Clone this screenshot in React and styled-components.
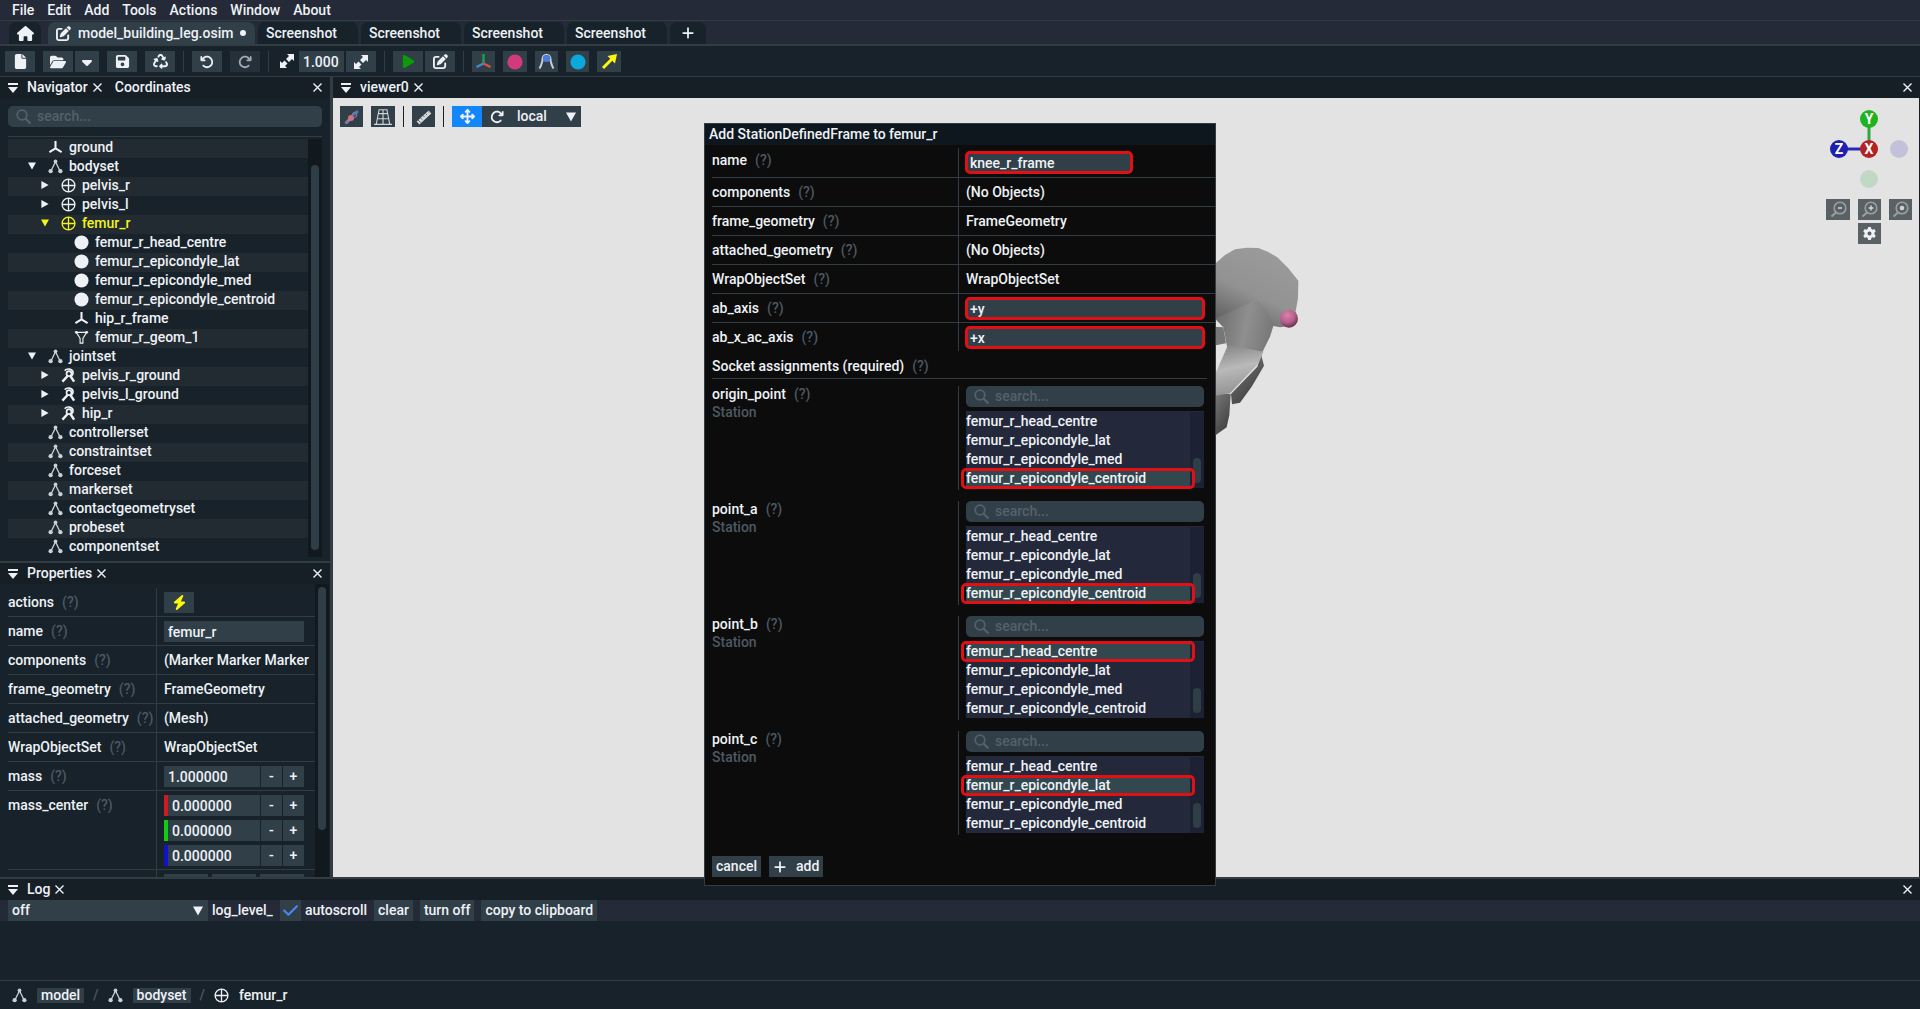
import React from "react";
import styled, { createGlobalStyle, css } from "styled-components";
import {
  FaHouse, FaFile, FaFolderOpen, FaCaretDown, FaFloppyDisk, FaRecycle, FaArrowRotateLeft,
  FaArrowRotateRight, FaPlay, FaPenToSquare, FaBolt, FaPlus, FaGear, FaCheck, FaArrowsUpDownLeftRight,
} from "react-icons/fa6";

const c = {
  text: "#eef2f6",
  dim: "#4d5963",
  bar: "#242a37",
  panel: "#18222a",
  head: "#161e26",
  zebra: "#222a32",
  control: "#313f49",
  line: "#323c43",
  modal: "#0c0c0c",
  red: "#e01014",
};

const GlobalStyle = createGlobalStyle`
  *, *::before, *::after { box-sizing: border-box; }
  body { margin: 0; background: ${c.panel}; overflow: hidden; }
  body, button, input, select {
    font: 500 14px/19px Roboto, "Liberation Sans", sans-serif;
    color: ${c.text};
  }
  button, input, select { border: 0; border-radius: 0; padding: 0; margin: 0; outline: none; }
  ul { list-style: none; margin: 0; padding: 0; }
  svg { display: block; flex: none; }
`;

const Page = styled.div`
  display: flex;
  flex-direction: column;
  height: 100vh;
`;

/* ---------- top bars ---------- */
const MenuBar = styled.nav`
  display: flex;
  gap: 3px;
  height: 21px;
  padding: 0 7px;
  background: ${c.bar};
  border-bottom: 1px solid ${c.line};
`;
const MenuItem = styled.button`
  padding: 0 5px;
  background: none;
  line-height: 21px;
`;
const TabBar = styled.div`
  display: flex;
  gap: 3px;
  height: 25px;
  padding: 1px 9px 0;
  background: ${c.bar};
  border-bottom: 2px solid ${c.line};
`;
const Tab = styled.button`
  display: flex;
  align-items: center;
  gap: 7px;
  width: ${(p) => p.$width}px;
  padding: 0 8px;
  justify-content: ${(p) => (p.$center ? "center" : "flex-start")};
  border-radius: 7px 7px 0 0;
  background: ${(p) => (p.$active ? c.control : c.panel)};
  white-space: nowrap;
`;
const HomeTab = styled(Tab)`
  margin-right: 4px;
`;
const Dot = styled.span`
  width: 6px;
  height: 6px;
  border-radius: 50%;
  background: ${c.text};
`;
const Toolbar = styled.div`
  display: flex;
  gap: 8px;
  height: 31px;
  padding: 5px;
  border-bottom: 1px solid ${c.line};
`;
const Group = styled.div`
  display: flex;
  gap: ${(p) => p.$gap ?? 2}px;
`;
const Divider = styled.span`
  width: 1px;
  height: 21px;
  background: ${(p) => p.$color ?? c.line};
`;
const IconButton = styled.button`
  display: flex;
  flex: none;
  align-items: center;
  justify-content: center;
  width: ${(p) => p.$width ?? 30}px;
  height: 21px;
  background: ${(p) => p.$bg ?? c.control};
  color: ${(p) => p.$color ?? c.text};
`;
const ScaleIcon = styled.span`
  display: flex;
  align-items: center;
  justify-content: center;
  width: 20px;
`;

/* ---------- form controls ---------- */
const highlight = css`
  outline: 3px solid ${c.red};
  outline-offset: -2px;
  border-radius: 4px;
`;
const Field = styled.input`
  width: ${(p) => p.$width ?? "100%"};
  min-width: 0;
  height: 21px;
  padding: 0 4px;
  background: ${c.control};
  ${(p) => p.$marked && highlight}
`;
const TextButton = styled.button`
  display: flex;
  align-items: center;
  gap: 9px;
  height: ${(p) => p.$height ?? 21}px;
  padding: 0 4px;
  background: ${c.control};
  white-space: nowrap;
`;
const SelectWrap = styled.div`
  display: grid;
  align-items: center;
  width: ${(p) => p.$width}px;
  height: 21px;
  background: ${c.control};
  & > * { grid-area: 1 / 1; }
  svg { justify-self: end; margin-right: 5px; pointer-events: none; }
`;
const Select = styled.select`
  appearance: none;
  width: 100%;
  height: 21px;
  padding: 0 ${(p) => p.$pad ?? 4}px;
  background: none;
`;
const SearchWrap = styled.label`
  display: flex;
  align-items: center;
  gap: 6px;
  height: 21px;
  padding: 0 8px;
  border-radius: 5px;
  background: ${c.control};
  color: #54616b;
`;
const SearchInput = styled.input`
  flex: 1;
  min-width: 0;
  background: none;
  &::placeholder { color: #54616b; opacity: 1; }
`;

/* ---------- panels ---------- */
const Main = styled.div`
  display: flex;
  flex: 1;
  min-height: 0;
`;
const Sidebar = styled.aside`
  display: flex;
  flex-direction: column;
  width: 333px;
  border-right: 3px solid ${c.line};
`;
const PanelHead = styled.div`
  display: flex;
  align-items: center;
  gap: 5px;
  height: 21px;
  padding: 0 8px;
  background: ${c.head};
  flex: none;
`;
const PanelTitle = styled.span`
  margin-left: ${(p) => p.$left ?? 4}px;
`;
const BareButton = styled.button`
  display: flex;
  background: none;
  margin-left: ${(p) => (p.$end ? "auto" : "0")};
`;
const Navigator = styled.section`
  padding-bottom: 4px;
  border-bottom: 2px solid ${c.line};
`;
const NavBody = styled.div`
  padding: 8px 8px 0;
`;
const TreeArea = styled.div`
  display: flex;
  margin-top: 9px;
  padding-top: 2px;
  border-top: 1px solid ${c.line};
`;
const Tree = styled.ul`
  flex: 1;
`;
const TreeRow = styled.li`
  display: flex;
  align-items: center;
  height: 19px;
  padding-bottom: 3px;
  padding-left: ${(p) => 20 + p.$depth * 13}px;
  color: ${(p) => (p.$selected ? "#f4f41c" : c.text)};
  &:nth-child(odd) { background: ${c.zebra}; }
`;
const Twisty = styled.span`
  width: 20px;
`;
const NodeIcon = styled.span`
  width: 21px;
`;
const Track = styled.div`
  width: 14px;
  padding: ${(p) => p.$top}px 3px 0;
  background: ${(p) => p.$bg ?? "#11191f"};
`;
const Thumb = styled.div`
  height: ${(p) => p.$height}px;
  border-radius: 4px;
  background: #2f3d47;
`;
const Properties = styled.section`
  display: flex;
  flex-direction: column;
  flex: 1;
  min-height: 0;
`;
const PropBody = styled.div`
  display: flex;
  flex: 1;
  min-height: 0;
  overflow: hidden;
  padding: 0 1px 0 8px;
`;
const PropList = styled.div`
  flex: 1;
  min-width: 0;
  padding-top: 4px;
`;
const PropRow = styled.div`
  display: grid;
  grid-template-columns: ${(p) => p.$cols ?? "148px 1fr"};
  border-bottom: 1px solid ${(p) => (p.$plain ? "transparent" : c.line)};
`;
const PropLabel = styled.div`
  display: flex;
  gap: 8px;
  padding: 4px 0 3px;
  line-height: ${(p) => (p.$tight ? 17 : 21)}px;
`;
const Hint = styled.span`
  color: ${c.dim};
`;
const PropValue = styled.div`
  display: flex;
  flex-direction: column;
  gap: 4px;
  min-width: 0;
  padding: 4px ${(p) => p.$right ?? 11}px ${(p) => (p.$tight ? 4 : 3)}px 7px;
  border-left: 1px solid ${c.line};
`;
const ValueText = styled.span`
  line-height: 21px;
  white-space: nowrap;
  overflow: hidden;
`;
const WideValueText = styled(ValueText)`
  margin-right: -8px;
`;
const NumberRow = styled.div`
  display: flex;
  gap: 1px;
`;
const AxisBar = styled.span`
  flex: none;
  width: 4px;
  margin-right: -1px;
  background: ${(p) => p.$color};
`;
const Triple = styled.div`
  display: grid;
  grid-template-columns: repeat(3, 1fr);
  gap: 4px;
`;

/* ---------- viewer ---------- */
const Viewer = styled.section`
  display: flex;
  flex-direction: column;
  flex: 1;
  min-width: 0;
`;
const Scene = styled.div`
  position: relative;
  display: flex;
  justify-content: space-between;
  align-items: flex-start;
  flex: 1;
  min-height: 0;
  padding: 8px 7px;
  background: #e3e3e3;
  border-right: 1px solid ${c.head};
`;
const Bone = styled.svg`
  position: absolute;
  top: 122px;
  left: calc(50% + 54px);
`;
const GizmoArea = styled.div`
  display: flex;
  flex-direction: column;
  align-items: center;
  gap: 3px;
  width: 86px;
`;

/* ---------- log & breadcrumbs ---------- */
const Log = styled.section`
  height: 103px;
  border-top: 2px solid ${c.line};
`;
const LogBar = styled.div`
  display: flex;
  align-items: center;
  gap: 7px;
  padding: 0 8px;
  background: ${c.bar};
`;
const InlineLabel = styled.label`
  display: flex;
  align-items: center;
  gap: 4px;
`;
const CheckWrap = styled.span`
  display: grid;
  place-items: center;
  width: 21px;
  height: 21px;
  background: ${c.control};
  color: #4a87f0;
  & > * { grid-area: 1 / 1; }
  svg { pointer-events: none; visibility: hidden; }
  input:checked + svg { visibility: visible; }
`;
const CheckInput = styled.input`
  appearance: none;
  width: 21px;
  height: 21px;
`;
const Breadcrumbs = styled.nav`
  display: flex;
  align-items: center;
  gap: 10px;
  height: 29px;
  padding: 0 12px;
  border-top: 1px solid ${c.line};
`;
const Slash = styled.span`
  color: ${c.dim};
  margin: 0 -1px;
`;

/* ---------- dialog ---------- */
const Overlay = styled.div`
  position: fixed;
  inset: 0;
  display: grid;
  place-items: center;
`;
const Dialog = styled.div`
  width: 512px;
  background: ${c.modal};
  border: 1px solid #333d42;
`;
const DialogTitle = styled.h1`
  margin: 0;
  padding: 0 4px;
  font: inherit;
  line-height: 21px;
  background: #0e161e;
`;
const DialogBody = styled.div`
  padding: 3px 0 8px 7px;
`;
const SectionTitle = styled.div`
  display: flex;
  gap: 8px;
  height: 27px;
  margin-right: 8px;
  padding-top: 5px;
  border-bottom: 1px solid ${c.line};
`;
const SocketRow = styled.div`
  display: grid;
  grid-template-columns: 246px 1fr;
  height: 104px;
  margin-top: 9px;
  margin-bottom: 11px;
  &:first-of-type { margin-top: 0; }
`;
const SocketName = styled.div`
  display: flex;
  gap: 8px;
  line-height: 16px;
`;
const SocketType = styled.div`
  line-height: 20px;
  color: ${c.dim};
`;
const SocketValue = styled.div`
  display: flex;
  flex-direction: column;
  gap: 4px;
  padding: 0 11px 0 7px;
  border-left: 1px solid ${c.line};
`;
const ListBox = styled.div`
  display: flex;
  height: 77px;
  padding-top: 1px;
  background: #23293a;
`;
const Options = styled.div`
  flex: 1;
`;
const Option = styled.button`
  position: relative;
  display: block;
  width: 100%;
  height: 19px;
  background: ${(p) => (p.$chosen ? "#33474e" : "none")};
  text-align: left;
  ${(p) => p.$chosen && css`
    &::after {
      content: "";
      position: absolute;
      inset: -1px -5px;
      border: 3px solid ${c.red};
      border-radius: 5px;
    }
  `}
`;
const Sockets = styled.div`
  padding-top: 7px;
`;
const Actions = styled.div`
  display: flex;
  gap: 8px;
  padding-top: 10px;
`;

/* ---------- drawings ---------- */
const Svg = ({ w = 16, h = w, box = "0 0 16 16", children }) => (
  <svg width={w} height={h} viewBox={box} fill="none" stroke="currentColor" aria-hidden="true">{children}</svg>
);
const Cross = () => <Svg w={9} box="0 0 9 9"><path d="M.5.5l8 8M8.5.5l-8 8" strokeWidth="1.400" /></Svg>;
const Collapse = () => (
  <Svg w={10} box="0 0 10 10"><path d="M0 0h10v2H0zM0 4h10L5 10z" fill="currentColor" stroke="none" /></Svg>
);
const Down = ({ size = 10 }) => (
  <Svg w={size} box="0 0 10 10"><path d="M0 .5h10L5 9.500z" fill="currentColor" stroke="none" /></Svg>
);
const Expand = () => (
  <Svg w={16}>
    <path d="M8 1h7v7l-2-2-3 3-3-3 3-3zM8 15H1V8l2 2 2.500-2.500 3 3L6 13z" fill="currentColor" stroke="none" />
  </Svg>
);
const Lens = () => (
  <Svg w={15} box="0 0 15 15"><circle cx="6" cy="6" r="4.800" strokeWidth="1.800" /><path d="M9.500 9.500l5 5" strokeWidth="2.200" /></Svg>
);
const nodeDrawings = {
  frame: <path d="M8 1v8M8 9l-6.500 4M8 9l6.500 4" strokeWidth="2.200" />,
  set: (
    <>
      <path d="M8 3L3 13M8 3l5 10" strokeWidth="1.400" stroke="#c9d0d6" />
      <g stroke="none" fill="#c9d0d6"><circle cx="8" cy="2.500" r="2" /><circle cx="2.800" cy="13" r="2.300" /><circle cx="13.200" cy="13" r="2.300" /></g>
    </>
  ),
  body: <><circle cx="8" cy="8" r="6.800" strokeWidth="1.400" /><path d="M8 1v14M1 8h14" strokeWidth="1.400" /></>,
  station: <circle cx="8" cy="8" r="7.500" fill="currentColor" stroke="none" />,
  mesh: (
    <>
      <path d="M2.500 2.500h11L9.500 9v5h-3V9z" strokeWidth="1.200" />
      <g stroke="none" fill="currentColor"><circle cx="2.500" cy="2.500" r="1.500" /><circle cx="13.500" cy="2.500" r="1.500" /></g>
    </>
  ),
  joint: (
    <>
      <path d="M1.500 14.500L7 8.500M14 14.500L10 8.500" strokeWidth="2.600" />
      <circle cx="8.500" cy="6" r="2.600" strokeWidth="1.800" />
      <path d="M4 3c2-3 8-2.500 8.800 1.500.3 2-.8 3.500-2 4.500" strokeWidth="1.800" />
    </>
  ),
};
const Node = ({ kind }) => <Svg w={15}>{nodeDrawings[kind]}</Svg>;

const FrameIcon = () => (
  <Svg w={17} box="0 0 17 17">
    <path d="M8.500 1v9" stroke="#1fa04a" strokeWidth="2.400" /><path d="M8.500 10.500l-7 3.500" stroke="#4a86d4" strokeWidth="2.400" />
    <path d="M8.500 10.500l7 3.500" stroke="#dc5440" strokeWidth="2.400" />
  </Svg>
);
const Disc = ({ color }) => <Svg w={16}><circle cx="8" cy="8" r="7.600" fill={color} stroke="none" /></Svg>;
const JointIcon = () => (
  <Svg w={17} box="0 0 17 17">
    <path d="M5 6C4 8 4 12 1.500 15.500M12 6c1 2 1 6 3.500 9.500" stroke="#c8d0d8" strokeWidth="2" />
    <path d="M4 7C4-.5 13-.5 13 7" stroke="#c8d0d8" strokeWidth="1.300" /><circle cx="8.500" cy="5.500" r="3.600" fill="#4a7fe0" stroke="none" />
  </Svg>
);
const ArrowIcon = () => (
  <Svg w={17} box="0 0 17 17"><path d="M2 15l9-9" stroke="#fbf80c" strokeWidth="3" /><path d="M16 1l-2 9.500L6.500 3z" fill="#fbf80c" stroke="none" /></Svg>
);
const BoneLinkIcon = () => (
  <Svg w={16}>
    <path d="M2 14l5-5" stroke="#8a87b0" strokeWidth="3" /><path d="M9 6l5-4" stroke="#5a6f9c" strokeWidth="3" />
    <circle cx="7" cy="9" r="3" fill="#d5707e" stroke="none" /><circle cx="10.500" cy="6" r="2.400" fill="none" stroke="#7d86bd" /><circle cx="2.500" cy="13.500" r="1.800" fill="#7b759c" stroke="none" />
  </Svg>
);
const GridIcon = () => (
  <Svg w={18}><path d="M4.500 1.500h7l2.500 13H2zM8 1.500v13M4 5h8M3.300 9.500h9.600M0 14.500h16" strokeWidth="1" stroke="#cdd3d6" /></Svg>
);
const RulerIcon = () => (
  <Svg w={16}><path d="M2 14L14 3" stroke="#d5d9db" strokeWidth="4" /><path d="M2 11l2.500 2.500M4.500 9l1.500 1.500M7 6.500l1.500 1.500M9.500 4.500L11 6M12 2.500l1 1" stroke="#56636b" strokeWidth="1" /></Svg>
);
const ZoomIcon = ({ kind }) => (
  <Svg w={17} box="0 0 17 17">
    <circle cx="10" cy="7" r="5.800" stroke="#9b9fa1" strokeWidth="1.600" /><path d="M6 11.500L1.500 15.500" stroke="#9b9fa1" strokeWidth="2" />
    {kind === "fit" ? <circle cx="10" cy="7" r="2.300" fill="#d0d3d4" stroke="none" /> : <path d={kind === "in" ? "M7.500 7h5M10 4.500v5" : "M8 7h4"} stroke="#d0d3d4" strokeWidth="1.600" />}
  </Svg>
);

const AxisText = styled.text`
  font: 700 14px Roboto, "Liberation Sans", sans-serif;
  fill: #fff;
`;
const Gizmo = () => (
  <svg width="80" height="90" viewBox="0 0 80 90" aria-label="View axes">
    <path d="M40 43V13" stroke="#2fa843" strokeWidth="3" /><path d="M40 43H10" stroke="#2a2ab8" strokeWidth="3" />
    <circle cx="40" cy="13" r="9" fill="#1fb31f" /><circle cx="10" cy="43" r="9" fill="#1f1fb0" /><circle cx="40" cy="43" r="9" fill="#b42222" />
    <circle cx="70" cy="43" r="9" fill="#c3c1da" /><circle cx="40" cy="73" r="9" fill="#c1d9c4" />
    <g textAnchor="middle">
      <AxisText x="40" y="18">Y</AxisText><AxisText x="10" y="48">Z</AxisText><AxisText x="40" y="48">X</AxisText>
    </g>
  </svg>
);
const BoneMesh = () => (
  <Bone width="160" height="230" viewBox="0 0 480 690" aria-hidden="true">
    <defs>
      <linearGradient id="head" x1="0.8" y1="0" x2="0.3" y2="1"><stop offset="0" stopColor="#9c9c9c" /><stop offset=".6" stopColor="#929292" /><stop offset="1" stopColor="#636363" /></linearGradient>
      <linearGradient id="neck" x1="0" y1="0" x2="1" y2=".2"><stop offset="0" stopColor="#686868" /><stop offset=".6" stopColor="#8f8f8f" /><stop offset="1" stopColor="#7a7a7a" /></linearGradient>
      <linearGradient id="shaft" x1=".3" y1="0" x2=".5" y2="1"><stop offset="0" stopColor="#868686" /><stop offset=".45" stopColor="#b9b9b9" /><stop offset="1" stopColor="#8e8e8e" /></linearGradient>
      <linearGradient id="low" x1="0" y1="0" x2=".6" y2="1"><stop offset="0" stopColor="#7c7c7c" /><stop offset="1" stopColor="#3f3f3f" /></linearGradient>
      <radialGradient id="ball" cx=".4" cy=".3" r=".7"><stop offset="0" stopColor="#d982ab" /><stop offset=".6" stopColor="#b5608a" /><stop offset="1" stopColor="#6d2f50" /></radialGradient>
    </defs>
    <path d="M100 320L130 322L138 370L100 377z" fill="#777" />
    <path d="M100 518L152 522L148 585L140 622L100 650z" fill="url(#low)" />
    <path d="M243 403L252 437L215 500L180 548L156 553L153 522L232 440z" fill="url(#low)" />
    <path d="M100 136L135 105L165 88L200 83L235 84L265 96L292 112L325 145L355 182L354 235L345 285L325 318L300 322L280 318L236 236L130 300L100 300z" fill="url(#head)" />
    <path d="M105 296L236 236L282 312L270 350L243 405L145 400L130 322z" fill="url(#neck)" />
    <path d="M144 375L250 395L236 430L150 520L100 528V475z" fill="url(#shaft)" />
    <circle cx="327" cy="296" r="27" fill="url(#ball)" />
  </Bone>
);

/* ---------- data ---------- */
const tree = [
  [1, "frame", "ground"], [1, "set", "bodyset", "open"], [2, "body", "pelvis_r", "closed"], [2, "body", "pelvis_l", "closed"],
  [2, "body", "femur_r", "open"], [3, "station", "femur_r_head_centre"], [3, "station", "femur_r_epicondyle_lat"],
  [3, "station", "femur_r_epicondyle_med"], [3, "station", "femur_r_epicondyle_centroid"], [3, "frame", "hip_r_frame"],
  [3, "mesh", "femur_r_geom_1"], [1, "set", "jointset", "open"], [2, "joint", "pelvis_r_ground", "closed"],
  [2, "joint", "pelvis_l_ground", "closed"], [2, "joint", "hip_r", "closed"], [1, "set", "controllerset"],
  [1, "set", "constraintset"], [1, "set", "forceset"], [1, "set", "markerset"], [1, "set", "contactgeometryset"],
  [1, "set", "probeset"], [1, "set", "componentset"],
];
const stations = ["femur_r_head_centre", "femur_r_epicondyle_lat", "femur_r_epicondyle_med", "femur_r_epicondyle_centroid"];
const sockets = [["origin_point", 3], ["point_a", 3], ["point_b", 0], ["point_c", 1]];

const Search = ({ label }) => (
  <SearchWrap><Lens /><SearchInput type="search" placeholder="search..." aria-label={label} /></SearchWrap>
);
const Prop = ({ name, id, plain, tight, cols, right, children }) => (
  <PropRow $plain={plain} $cols={cols}>
    <PropLabel $tight={tight}><label htmlFor={id}>{name}</label><Hint>(?)</Hint></PropLabel>
    <PropValue $right={right} $tight={tight}>{children}</PropValue>
  </PropRow>
);
const NumberField = ({ id, label, value, color }) => (
  <NumberRow>
    {color && <AxisBar $color={color} />}
    <Field id={id} aria-label={label} defaultValue={value} />
    <IconButton $width={21} aria-label={`decrease ${label}`}>-</IconButton>
    <IconButton $width={21} aria-label={`increase ${label}`}>+</IconButton>
  </NumberRow>
);
const Socket = ({ name, chosen }) => (
  <SocketRow>
    <div>
      <SocketName>{name}<Hint>(?)</Hint></SocketName>
      <SocketType>Station</SocketType>
    </div>
    <SocketValue>
      <Search label={`search ${name}`} />
      <ListBox role="listbox" aria-label={name}>
        <Options>
          {stations.map((s, i) => (
            <Option key={s} role="option" aria-selected={i === chosen} $chosen={i === chosen}>{s}</Option>
          ))}
        </Options>
        <Track $top={46} $bg="#1c2233"><Thumb $height={25} /></Track>
      </ListBox>
    </SocketValue>
  </SocketRow>
);

const dialogCols = "246px 1fr";

export default function App() {
  return (
    <Page>
      <GlobalStyle />
      <MenuBar>
        {["File", "Edit", "Add", "Tools", "Actions", "Window", "About"].map((m) => <MenuItem key={m}>{m}</MenuItem>)}
      </MenuBar>
      <TabBar>
        <HomeTab $width={32} $center aria-label="Home"><FaHouse size={17} /></HomeTab>
        <Tab $width={207} $active><FaPenToSquare size={15} />model_building_leg.osim<Dot /></Tab>
        {[1, 2, 3, 4].map((n) => <Tab key={n} $width={100}>Screenshot</Tab>)}
        <Tab $width={36} $center aria-label="New tab"><FaPlus size={14} /></Tab>
      </TabBar>
      <Toolbar>
        <IconButton aria-label="New"><FaFile size={15} /></IconButton>
        <Group>
          <IconButton aria-label="Open"><FaFolderOpen size={16} /></IconButton>
          <IconButton $width={24} aria-label="Recent files"><FaCaretDown size={16} /></IconButton>
        </Group>
        <IconButton aria-label="Save"><FaFloppyDisk size={15} /></IconButton>
        <IconButton aria-label="Reload"><FaRecycle size={15} /></IconButton>
        <Divider />
        <IconButton aria-label="Undo"><FaArrowRotateLeft size={14} /></IconButton>
        <IconButton aria-label="Redo" $color="#a3abb1" $bg="#25313a"><FaArrowRotateRight size={14} /></IconButton>
        <Divider />
        <Group>
          <ScaleIcon><Expand /></ScaleIcon>
          <Field $width="45px" defaultValue="1.000" aria-label="Scale factor" />
          <IconButton aria-label="Auto scale"><Expand /></IconButton>
        </Group>
        <Divider />
        <Group>
          <IconButton aria-label="Simulate" $color="#0a9a0a"><FaPlay size={15} /></IconButton>
          <IconButton aria-label="Edit simulation"><FaPenToSquare size={15} /></IconButton>
        </Group>
        <Divider />
        <IconButton $width={23} aria-label="Toggle frames"><FrameIcon /></IconButton>
        <IconButton $width={24} aria-label="Toggle markers"><Disc color="#d23a7d" /></IconButton>
        <IconButton $width={23} aria-label="Toggle wrap"><JointIcon /></IconButton>
        <IconButton $width={23} aria-label="Toggle contact"><Disc color="#0ba8dc" /></IconButton>
        <IconButton $width={24} aria-label="Toggle forces"><ArrowIcon /></IconButton>
      </Toolbar>
      <Main>
        <Sidebar>
          <Navigator>
            <PanelHead>
              <Collapse /><PanelTitle>Navigator</PanelTitle>
              <BareButton aria-label="Close Navigator"><Cross /></BareButton>
              <PanelTitle $left={8}>Coordinates</PanelTitle>
              <BareButton $end aria-label="Close panel"><Cross /></BareButton>
            </PanelHead>
            <NavBody>
              <Search label="search components" />
              <TreeArea>
                <Tree>
                  {tree.map(([depth, kind, name, state]) => (
                    <TreeRow key={name} $depth={depth - 1} $selected={name === "femur_r"}>
                      <Twisty>
                        {state === "open" && <Down size={8} />}
                        {state === "closed" && <Svg w={8} box="0 0 10 10"><path d="M.5 0v10l9-5z" fill="currentColor" stroke="none" /></Svg>}
                      </Twisty>
                      <NodeIcon><Node kind={kind} /></NodeIcon>
                      {name}
                    </TreeRow>
                  ))}
                </Tree>
                <Track $top={26}><Thumb $height={385} /></Track>
              </TreeArea>
            </NavBody>
          </Navigator>
          <Properties>
            <PanelHead>
              <Collapse /><PanelTitle>Properties</PanelTitle>
              <BareButton aria-label="Close Properties"><Cross /></BareButton>
              <BareButton $end aria-label="Close panel"><Cross /></BareButton>
            </PanelHead>
            <PropBody>
              <PropList>
                <Prop name="actions" id="actions"><IconButton id="actions" aria-label="actions" $color="#fbf80c"><FaBolt size={15} /></IconButton></Prop>
                <Prop name="name" id="name"><Field id="name" defaultValue="femur_r" /></Prop>
                <Prop name="components"><WideValueText>(Marker Marker Marker M</WideValueText></Prop>
                <Prop name="frame_geometry"><ValueText>FrameGeometry</ValueText></Prop>
                <Prop name="attached_geometry"><ValueText>(Mesh)</ValueText></Prop>
                <Prop name="WrapObjectSet"><ValueText>WrapObjectSet</ValueText></Prop>
                <Prop name="mass" id="mass"><NumberField id="mass" label="mass" value="1.000000" /></Prop>
                <Prop name="mass_center" id="mass-x">
                  <NumberField id="mass-x" label="mass_center x" value="0.000000" color="#cc1a1e" />
                  <NumberField label="mass_center y" value="0.000000" color="#12cc12" />
                  <NumberField label="mass_center z" value="0.000000" color="#1212cc" />
                </Prop>
                <PropRow>
                  <span />
                  <PropValue><Triple><Field aria-label="inertia xx" /><Field aria-label="inertia yy" /><Field aria-label="inertia zz" /></Triple></PropValue>
                </PropRow>
              </PropList>
              <Track $top={3}><Thumb $height={243} /></Track>
            </PropBody>
          </Properties>
        </Sidebar>
        <Viewer>
          <PanelHead>
            <Collapse /><PanelTitle>viewer0</PanelTitle>
            <BareButton aria-label="Close viewer0"><Cross /></BareButton>
            <BareButton $end aria-label="Close panel"><Cross /></BareButton>
          </PanelHead>
          <Scene>
            <BoneMesh />
            <Group $gap={8}>
              <IconButton $width={23} aria-label="Muscle options"><BoneLinkIcon /></IconButton>
              <IconButton $width={24} aria-label="Grid options"><GridIcon /></IconButton>
              <Divider $color="#1a1f24" />
              <IconButton $width={23} aria-label="Measure"><RulerIcon /></IconButton>
              <Divider $color="#1a1f24" />
              <Group $gap={0}>
                <IconButton $bg="#1287fc" aria-label="Translate"><FaArrowsUpDownLeftRight size={15} /></IconButton>
                <IconButton aria-label="Rotate"><FaArrowRotateRight size={14} /></IconButton>
                <SelectWrap $width={69}>
                  <Select aria-label="Coordinate space" $pad={5}><option>local</option><option>world</option></Select>
                  <Down />
                </SelectWrap>
              </Group>
            </Group>
            <GizmoArea>
              <Gizmo />
              <Group $gap={8}>
                <IconButton $width={24} $bg="#5a6164" aria-label="Zoom out"><ZoomIcon kind="out" /></IconButton>
                <IconButton $width={23} $bg="#5a6164" aria-label="Zoom in"><ZoomIcon kind="in" /></IconButton>
                <IconButton $width={23} $bg="#5a6164" aria-label="Zoom to fit"><ZoomIcon kind="fit" /></IconButton>
              </Group>
              <IconButton $width={23} $bg="#5a6164" aria-label="Scene settings"><FaGear size={13} /></IconButton>
            </GizmoArea>
          </Scene>
        </Viewer>
      </Main>
      <Log>
        <PanelHead>
          <Collapse /><PanelTitle>Log</PanelTitle>
          <BareButton aria-label="Close Log"><Cross /></BareButton>
          <BareButton $end aria-label="Close panel"><Cross /></BareButton>
        </PanelHead>
        <LogBar>
          <InlineLabel>
            <SelectWrap $width={200}>
              <Select><option>off</option><option>info</option></Select>
              <Down />
            </SelectWrap>
            log_level_
          </InlineLabel>
          <InlineLabel><CheckWrap><CheckInput type="checkbox" defaultChecked /><FaCheck size={17} /></CheckWrap>autoscroll</InlineLabel>
          <TextButton>clear</TextButton>
          <TextButton>turn off</TextButton>
          <TextButton>copy to clipboard</TextButton>
        </LogBar>
      </Log>
      <Breadcrumbs>
        <Node kind="set" /><TextButton $height={15}>model</TextButton><Slash>/</Slash>
        <Node kind="set" /><TextButton $height={15}>bodyset</TextButton><Slash>/</Slash>
        <Node kind="body" /><span>femur_r</span>
      </Breadcrumbs>
      <Overlay>
        <Dialog role="dialog" aria-labelledby="dialog-title">
          <DialogTitle id="dialog-title">Add StationDefinedFrame to femur_r</DialogTitle>
          <DialogBody>
            <Prop cols={dialogCols} tight name="name" id="new-name"><Field id="new-name" $width="166px" $marked defaultValue="knee_r_frame" /></Prop>
            <Prop cols={dialogCols} name="components"><ValueText>(No Objects)</ValueText></Prop>
            <Prop cols={dialogCols} name="frame_geometry"><ValueText>FrameGeometry</ValueText></Prop>
            <Prop cols={dialogCols} name="attached_geometry"><ValueText>(No Objects)</ValueText></Prop>
            <Prop cols={dialogCols} name="WrapObjectSet"><ValueText>WrapObjectSet</ValueText></Prop>
            <Prop cols={dialogCols} name="ab_axis" id="ab-axis"><Field id="ab-axis" $marked defaultValue="+y" /></Prop>
            <Prop cols={dialogCols} name="ab_x_ac_axis" id="ab-x-ac-axis" plain><Field id="ab-x-ac-axis" $marked defaultValue="+x" /></Prop>
            <SectionTitle>Socket assignments (required)<Hint>(?)</Hint></SectionTitle>
            <Sockets>{sockets.map(([name, chosen]) => <Socket key={name} name={name} chosen={chosen} />)}</Sockets>
            <Actions>
              <TextButton>cancel</TextButton>
              <TextButton><FaPlus size={14} />add</TextButton>
            </Actions>
          </DialogBody>
        </Dialog>
      </Overlay>
    </Page>
  );
}
